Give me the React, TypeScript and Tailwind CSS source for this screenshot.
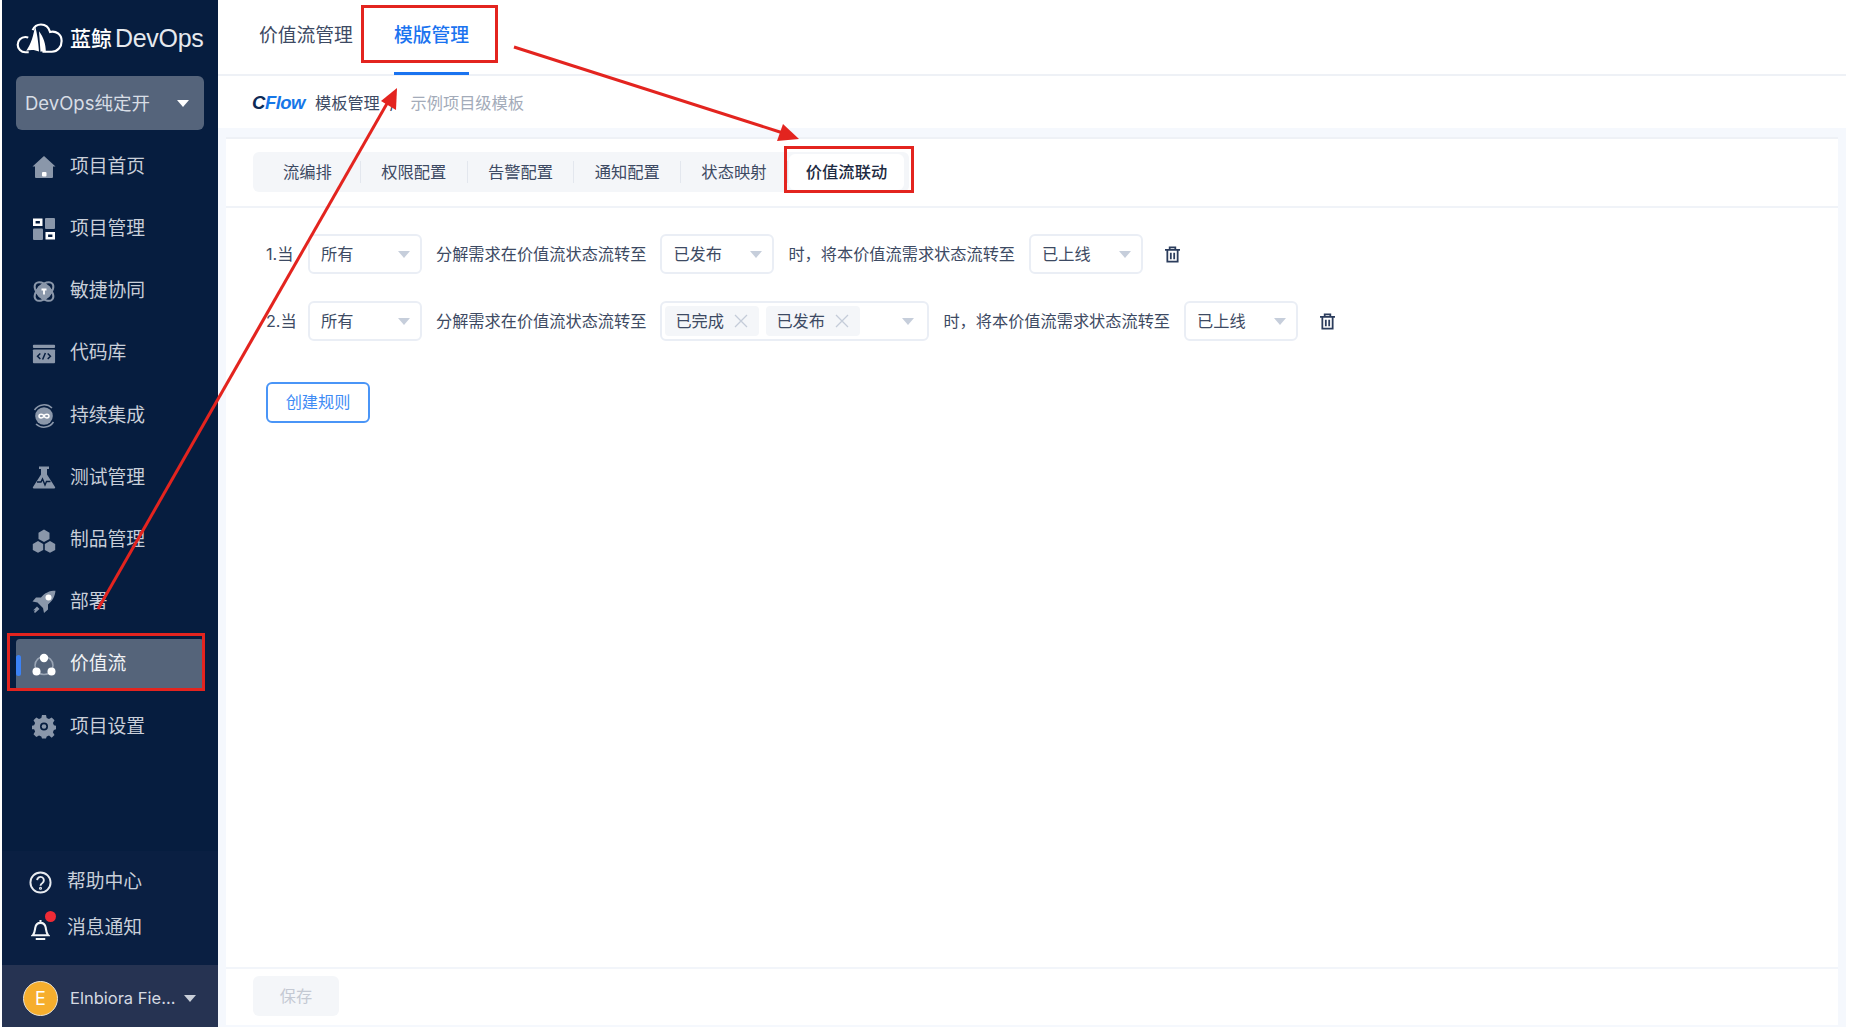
import React from 'react';

const FONT = 'font-["Inter","Noto_Sans_CJK_SC",sans-serif]';

const HomeIcon = () => (
  <svg viewBox="0 0 24 24" className="h-[24px] w-[24px]" fill="currentColor">
    <path d="M12 1 23.5 11.5H21V22a1 1 0 0 1-1 1H4a1 1 0 0 1-1-1V11.5H.5Z" />
    <rect x="10" y="17" width="4.5" height="4.5" rx="1" fill="#fff" />
  </svg>
);

const ProjectIcon = () => (
  <svg viewBox="0 0 24 24" className="h-[24px] w-[24px]" fill="currentColor">
    <path fillRule="evenodd" d="M1 1.5h9.5v7.5H1Zm2.600 2.400v2.700h4.300V3.900Z" fill="#fff" />
    <rect x="13" y="1" width="10" height="11" rx="1" />
    <rect x="1" y="11.500" width="10" height="11.500" rx="1" />
    <path fillRule="evenodd" d="M13.500 15h9.500v7.500h-9.500Zm2.600 2.400v2.700h4.300v-2.700Z" fill="#fff" />
  </svg>
);

const AgileIcon = () => (
  <svg viewBox="0 0 24 24" className="h-[25px] w-[25px]" fill="none" stroke="currentColor">
    <ellipse cx="12" cy="12" rx="11.500" ry="6.500" strokeWidth="2" transform="rotate(45 12 12)" />
    <ellipse cx="12" cy="12" rx="11.500" ry="6.500" strokeWidth="2" transform="rotate(-45 12 12)" />
    <circle cx="12" cy="12" r="7.500" fill="currentColor" stroke="none" />
    <path d="M9.500 10h5M12 10v5" stroke="#fff" strokeWidth="1.800" />
  </svg>
);

const CodeIcon = () => (
  <svg viewBox="0 0 26 24" className="h-[24px] w-[26px]" fill="currentColor">
    <rect x="1" y="2" width="24" height="3.500" rx="1" />
    <rect x="1" y="7" width="24" height="15" rx="1" />
    <path d="M9 11.500 6 14.500 9 17.500M17 11.500l3 3-3 3M14.500 11l-3 7" fill="none" stroke="#061d3f" strokeWidth="1.600" />
  </svg>
);

const CiIcon = () => (
  <svg viewBox="0 0 24 24" className="h-[26px] w-[26px]" fill="none" stroke="currentColor">
    <path d="M20 4A11.500 11.500 0 0 0 2.500 6M4 20a11.500 11.500 0 0 0 17.500-2" strokeWidth="1.500" />
    <circle cx="12" cy="12" r="8.800" fill="currentColor" stroke="none" />
    <path d="M12 12c-1-2.500-5-2.500-5 0s4 2.500 5 0 5-2.500 5 0-4 2.500-5 0Z" stroke="#fff" strokeWidth="1.500" />
  </svg>
);

const TestIcon = () => (
  <svg viewBox="0 0 24 24" className="h-[25px] w-[25px]" fill="currentColor">
    <path d="M7 1h10v2.500h-2V9l8 12.500a1 1 0 0 1-.8 1.500H1.800A1 1 0 0 1 1 21.500L9 9V3.500H7Z" />
    <path d="M5 16.500h4l1.500-3 2.500 6 1.500-3.500h4" fill="none" stroke="#061d3f" strokeWidth="1.400" />
  </svg>
);

const ProductIcon = () => (
  <svg viewBox="0 0 24 24" className="h-[25px] w-[25px]" fill="currentColor">
    <path d="M12 1l5.500 3.200v6.300L12 13.600 6.500 10.500V4.200Z" />
    <path d="M6 12.500l5.200 3v6L6 24.300.8 21.500v-6Z" />
    <path d="M18 12.500l5.200 3v6L18 24.300l-5.200-2.800v-6Z" />
  </svg>
);

const RocketIcon = () => (
  <svg viewBox="0 0 24 24" className="h-[26px] w-[26px]" fill="currentColor">
    <path d="M23.500.500c-6 .2-11 2.500-14.500 7H4L.5 11.500l5 1 5.500 5.500 1 5 4-3.500v-5c4.500-3.500 7.300-8.500 7.500-14.500Z" />
    <circle cx="16.500" cy="7.500" r="3" fill="#fff" />
    <path d="M5 16.500l2.500 2.500L3 23l-1-1 1-2-2 .5Z" />
  </svg>
);

const FlowIcon = () => (
  <svg viewBox="0 0 24 24" className="h-[26px] w-[26px]" fill="none">
    <circle cx="12" cy="12.500" r="9" stroke="#9aa5b5" strokeWidth="1.500" />
    <circle cx="12" cy="5" r="4.200" fill="#fff" />
    <circle cx="4.500" cy="18.500" r="4" fill="#fff" />
    <circle cx="19.500" cy="18.500" r="4" fill="#fff" />
  </svg>
);

const GearIcon = () => (
  <svg viewBox="0 0 24 24" className="h-[25px] w-[25px]" fill="currentColor">
    <path fillRule="evenodd" d="M10 .500h4l.7 3 2.300 1 2.700-1.600 2.800 2.800L20.900 8.400l1 2.300 2.100.500v3.600l-2.100.700-1 2.300 1.600 2.700-2.800 2.800L17 20.900l-2.300 1-.7 2.100h-4l-.7-2.100-2.300-1-2.700 1.600-2.800-2.800 1.600-2.700-1-2.300L0 14.800v-3.600l2.100-.5 1-2.300-1.600-2.700 2.800-2.800L7 4.500l2.300-1ZM12 8a4 4 0 1 0 0 8 4 4 0 0 0 0-8Z" />
    <circle cx="12" cy="12" r="2.300" />
  </svg>
);

const TrashIcon = () => (
  <svg viewBox="0 0 16 18" className="h-[17px] w-[15px]" fill="none" stroke="#2b3c5c" strokeWidth="1.900">
    <path d="M0 4h16M5 4V1.500h6V4M2.500 4v12.500h11V4M6.200 7v7M9.800 7v7" />
  </svg>
);

const Caret = ({ className }: { className: string }) => (
  <span className={`h-0 w-0 border-x-[6px] border-t-[7px] border-x-transparent ${className}`} />
);

const Select = ({ value, width }: { value: string; width: string }) => (
  <div className={`flex h-[40px] shrink-0 items-center justify-between rounded-md border-2 border-[#eaeef5] bg-white pl-[11px] pr-[10px] text-[16.200px] text-[#3d4a63] ${width}`}>
    <span>{value}</span>
    <Caret className="border-t-[#c6cedb]" />
  </div>
);

const Tag = ({ label }: { label: string }) => (
  <div className="flex h-[30px] w-[94px] items-center gap-[10px] rounded bg-[#f4f6f9] pl-[10px] text-[16.200px] text-[#3d4a63]">
    <span>{label}</span>
    <svg viewBox="0 0 14 14" className="h-[14px] w-[14px]" stroke="#c4ccd9" strokeWidth="1.300">
      <path d="M1 1l12 12M13 1 1 13" />
    </svg>
  </div>
);

const NAV = [
  { label: '项目首页', icon: <HomeIcon /> },
  { label: '项目管理', icon: <ProjectIcon /> },
  { label: '敏捷协同', icon: <AgileIcon /> },
  { label: '代码库', icon: <CodeIcon /> },
  { label: '持续集成', icon: <CiIcon /> },
  { label: '测试管理', icon: <TestIcon /> },
  { label: '制品管理', icon: <ProductIcon /> },
  { label: '部署', icon: <RocketIcon /> },
  { label: '价值流', icon: <FlowIcon />, active: true },
  { label: '项目设置', icon: <GearIcon /> },
];

const TABS = [
  { label: '流编排', cls: 'pl-[30px] pr-[28px]' },
  { label: '权限配置', cls: 'px-[20.300px]' },
  { label: '告警配置', cls: 'px-[20.300px]' },
  { label: '通知配置', cls: 'px-[20.300px]' },
  { label: '状态映射', cls: 'px-[20.300px]' },
];

const Sidebar = () => (
  <aside className="flex h-full w-[216px] shrink-0 flex-col bg-[#061d3f]">
    {/* Logo */}
    <div className="flex h-[76px] items-center pl-[14px] pt-[1px] text-white">
      <svg viewBox="0 0 48 32" className="h-[32px] w-[47px]" fill="none" stroke="#fff" strokeWidth="2.200">
        <path d="M13 29.500H9.500A7.700 7.700 0 0 1 9.500 14c1.200 0 2.200.2 3 .6" />
        <path d="M17 7c1.500-3.500 4.500-5.800 8.500-5.800 4.800 0 8 3 9.300 7.600 6-1.500 11.800 2.400 11.800 9.200 0 6-4 11-10 11H27" />
        <path d="M19.500 2.500c-1.500 9.500-4 18.500-9 25.500 4.500-1.300 9-1.200 13 .8-.6-9-1.800-18-4-26.300Z" fill="#fff" stroke="none" />
        <path d="M23.500 8c4.500 6 7 13 7 21.500-2-.7-4-.9-5.500-.4Z" fill="#fff" stroke="none" />
      </svg>
      <span className="ml-[7px] pt-[1px] text-[21px] font-medium">蓝鲸</span>
      <span className="ml-[3px] pt-[1px] font-['Liberation_Sans',sans-serif] text-[25px] font-light tracking-[-0.3px] text-[#e6e9ee]">DevOps</span>
    </div>
    <div className="mx-[14px] flex h-[54px] items-center justify-between rounded-md bg-[#55647b] pl-[9px] pr-[15px] pt-[1px] text-[18.500px] text-[#d8dde5]">
      <span>DevOps纯定开</span>
      <Caret className="border-t-white" />
    </div>
    {/* Nav */}
    <nav className="mt-[11px] flex flex-col gap-[10.200px]">
      {NAV.map(item => (
        <div
          key={item.label}
          className={`relative mx-[14px] flex h-[52px] items-center gap-[14px] rounded pl-[16px] text-[18.800px] ${item.active ? 'bg-[#55647a] text-[#f0f2f5]' : 'text-[#c9cfd9]'}`}
        >
          {item.active && <span className="absolute left-0 top-[16px] h-[21px] w-[5px] rounded-sm bg-[#3b82f6]" />}
          <span className={`flex w-[24px] shrink-0 justify-center ${item.active ? 'text-white' : 'text-[#8a97aa]'}`}>{item.icon}</span>
          <span>{item.label}</span>
        </div>
      ))}
    </nav>
    {/* Help + notifications */}
    <div className="mt-auto flex flex-col gap-[24px] bg-[#0a1f42] pb-[26px] pl-[27px] pt-[20px] text-[18.800px] text-[#c9cfd9]">
      <div className="flex h-[22px] items-center gap-[15px]">
        <svg viewBox="0 0 24 24" className="h-[23px] w-[23px]" fill="none" stroke="#e8ebf0" strokeWidth="2">
          <circle cx="12" cy="12" r="10.500" />
          <path d="M8.500 9.500a3.500 3.500 0 1 1 5.500 3c-1.300.8-2 1.500-2 3" />
          <circle cx="12" cy="18" r=".6" />
        </svg>
        <span>帮助中心</span>
      </div>
      <div className="flex h-[22px] items-center gap-[15px]">
        <span className="relative flex h-[23px] w-[23px] justify-center">
          <svg viewBox="0 0 20 24" className="h-[25px] w-[19px]" fill="none" stroke="#f2f4f7" strokeWidth="2.200">
            <path d="M2 18h16c-2-2-2-5-2.500-8C15 7 13 5 10 5S5 7 4.500 10C4 13 4 16 2 18ZM10 2v3M5 22h10" />
          </svg>
          <span className="absolute left-[16px] top-[-6px] h-[11px] w-[11px] rounded-full bg-[#ef2b36]" />
        </span>
        <span>消息通知</span>
      </div>
    </div>
    {/* User */}
    <div className="flex h-[62px] items-center bg-[#263352] pl-[21px] pt-[5px] text-[#d5dae2]">
      <span className="flex h-[35px] w-[35px] items-center justify-center rounded-full border border-[#e9e3d5] bg-[#f6ae2d] text-[18px] text-white">E</span>
      <span className="ml-[12px] text-[16.500px]">Elnbiora Fie...</span>
      <Caret className="ml-[9px] border-x-[5px] border-t-[6px] border-t-[#c9cfd9]" />
    </div>
  </aside>
);

const RuleText = ({ children }: { children: React.ReactNode }) => (
  <span className="shrink-0 whitespace-nowrap text-[16.200px] text-[#3d4a63]">{children}</span>
);

const Annotations = () => (
  <>
    <div className="pointer-events-none absolute left-[361px] top-[5px] h-[58px] w-[137px] border-[3px] border-[#e3241f]" />
    <div className="pointer-events-none absolute left-[784px] top-[146px] h-[47px] w-[130px] border-[3px] border-[#e3241f]" />
    <div className="pointer-events-none absolute left-[7px] top-[633px] h-[58px] w-[198px] border-[3px] border-[#e3241f]" />
    <svg className="pointer-events-none absolute left-0 top-0 h-[1027px] w-[1852px]" viewBox="0 0 1852 1027">
      <path d="M514 47 783 133" stroke="#e3241f" strokeWidth="3" />
      <path d="M799 139 777 141 783 124Z" fill="#e3241f" />
      <path d="M98 609 389 100" stroke="#e3241f" strokeWidth="3" />
      <path d="M397 88 396 110 381 101Z" fill="#e3241f" />
    </svg>
  </>
);

export default function App() {
  return (
    <div className={`relative flex h-[1027px] w-[1852px] overflow-hidden bg-white pl-[2px] pr-[6px] ${FONT}`}>
      <Sidebar />
      <main className="flex h-full min-w-0 flex-1 flex-col">
        {/* Top tabs */}
        <header className="flex h-[76px] shrink-0 border-b-2 border-[#eef1f6] pl-[41px] text-[18.800px]">
          <div className="flex h-full items-center pb-[1px] text-[#3d4a63]">价值流管理</div>
          <div className="relative ml-[41px] flex h-full items-center pb-[1px] font-medium text-[#1a73f0]">
            模版管理
            <span className="absolute bottom-[-1px] left-0 h-[3px] w-full bg-[#1a73f0]" />
          </div>
        </header>
        {/* Breadcrumb */}
        <div className="flex h-[52px] shrink-0 items-center pl-[34px] pt-[2px] text-[16.200px]">
          <span className="font-['Liberation_Sans',sans-serif] text-[18.500px] font-bold italic tracking-[-0.5px] text-[#0d2a55]">C<span className="text-[#1677e8]">Flow</span></span>
          <span className="ml-[10px] text-[#3d4a63]">模板管理</span>
          <span className="ml-[10px] text-[#3d4a63]">/</span>
          <span className="ml-[15px] text-[#a3abb9]">示例项目级模板</span>
        </div>
        {/* Panel */}
        <div className="flex min-h-0 flex-1 bg-[#f5f8fd] pb-[2px] pl-[8px] pr-[8px] pt-[9px]">
          <div className="flex min-w-0 flex-1 flex-col border-t-2 border-[#eef1f6] bg-white">
            <div className="flex h-[69px] shrink-0 items-start border-b-2 border-[#f0f3f8] pl-[27px] pt-[13px]">
              <div className="flex h-[40px] items-center rounded-md bg-[#f4f6f9] pr-[5px] text-[16.300px] text-[#3d4a63]">
                {TABS.map(tab => (
                  <div key={tab.label} className={`border-r border-[#e3e7ee] leading-[22px] ${tab.cls}`}>{tab.label}</div>
                ))}
                <div className="ml-[1px] flex h-[36px] items-center rounded-md bg-white px-[17px] font-medium text-[#1d2a42]">价值流联动</div>
              </div>
            </div>
            {/* Rules */}
            <div className="flex-1 pl-[40px] pt-[26px]">
              <div className="flex items-center gap-[14px]">
                <span className="w-[28px]"><RuleText>1.当</RuleText></span>
                <Select value="所有" width="w-[114px]" />
                <RuleText>分解需求在价值流状态流转至</RuleText>
                <Select value="已发布" width="w-[114px]" />
                <RuleText>时，将本价值流需求状态流转至</RuleText>
                <Select value="已上线" width="w-[114px]" />
                <span className="ml-[8px] flex"><TrashIcon /></span>
              </div>
              <div className="mt-[27px] flex items-center gap-[14px]">
                <span className="w-[28px]"><RuleText>2.当</RuleText></span>
                <Select value="所有" width="w-[114px]" />
                <RuleText>分解需求在价值流状态流转至</RuleText>
                <div className="flex h-[40px] w-[269px] shrink-0 items-center gap-[7px] rounded-md border-2 border-[#eaeef5] bg-white pl-[3px] pr-[13px]">
                  <Tag label="已完成" />
                  <Tag label="已发布" />
                  <Caret className="ml-auto border-t-[#c6cedb]" />
                </div>
                <RuleText>时，将本价值流需求状态流转至</RuleText>
                <Select value="已上线" width="w-[114px]" />
                <span className="ml-[8px] flex"><TrashIcon /></span>
              </div>
              <button className="mt-[41px] h-[41px] w-[104px] rounded-md border-2 border-[#4a95f7] bg-white text-[16.200px] text-[#3f8cf5]">创建规则</button>
            </div>
            {/* Footer */}
            <div className="h-[58px] shrink-0 border-t-2 border-[#f2f5fa] pl-[27px] pt-[7px]">
              <button className="h-[40px] w-[86px] rounded-md bg-[#f4f6f9] text-[16.200px] text-[#c4c9d3]">保存</button>
            </div>
          </div>
        </div>
      </main>
      <Annotations />
    </div>
  );
}
